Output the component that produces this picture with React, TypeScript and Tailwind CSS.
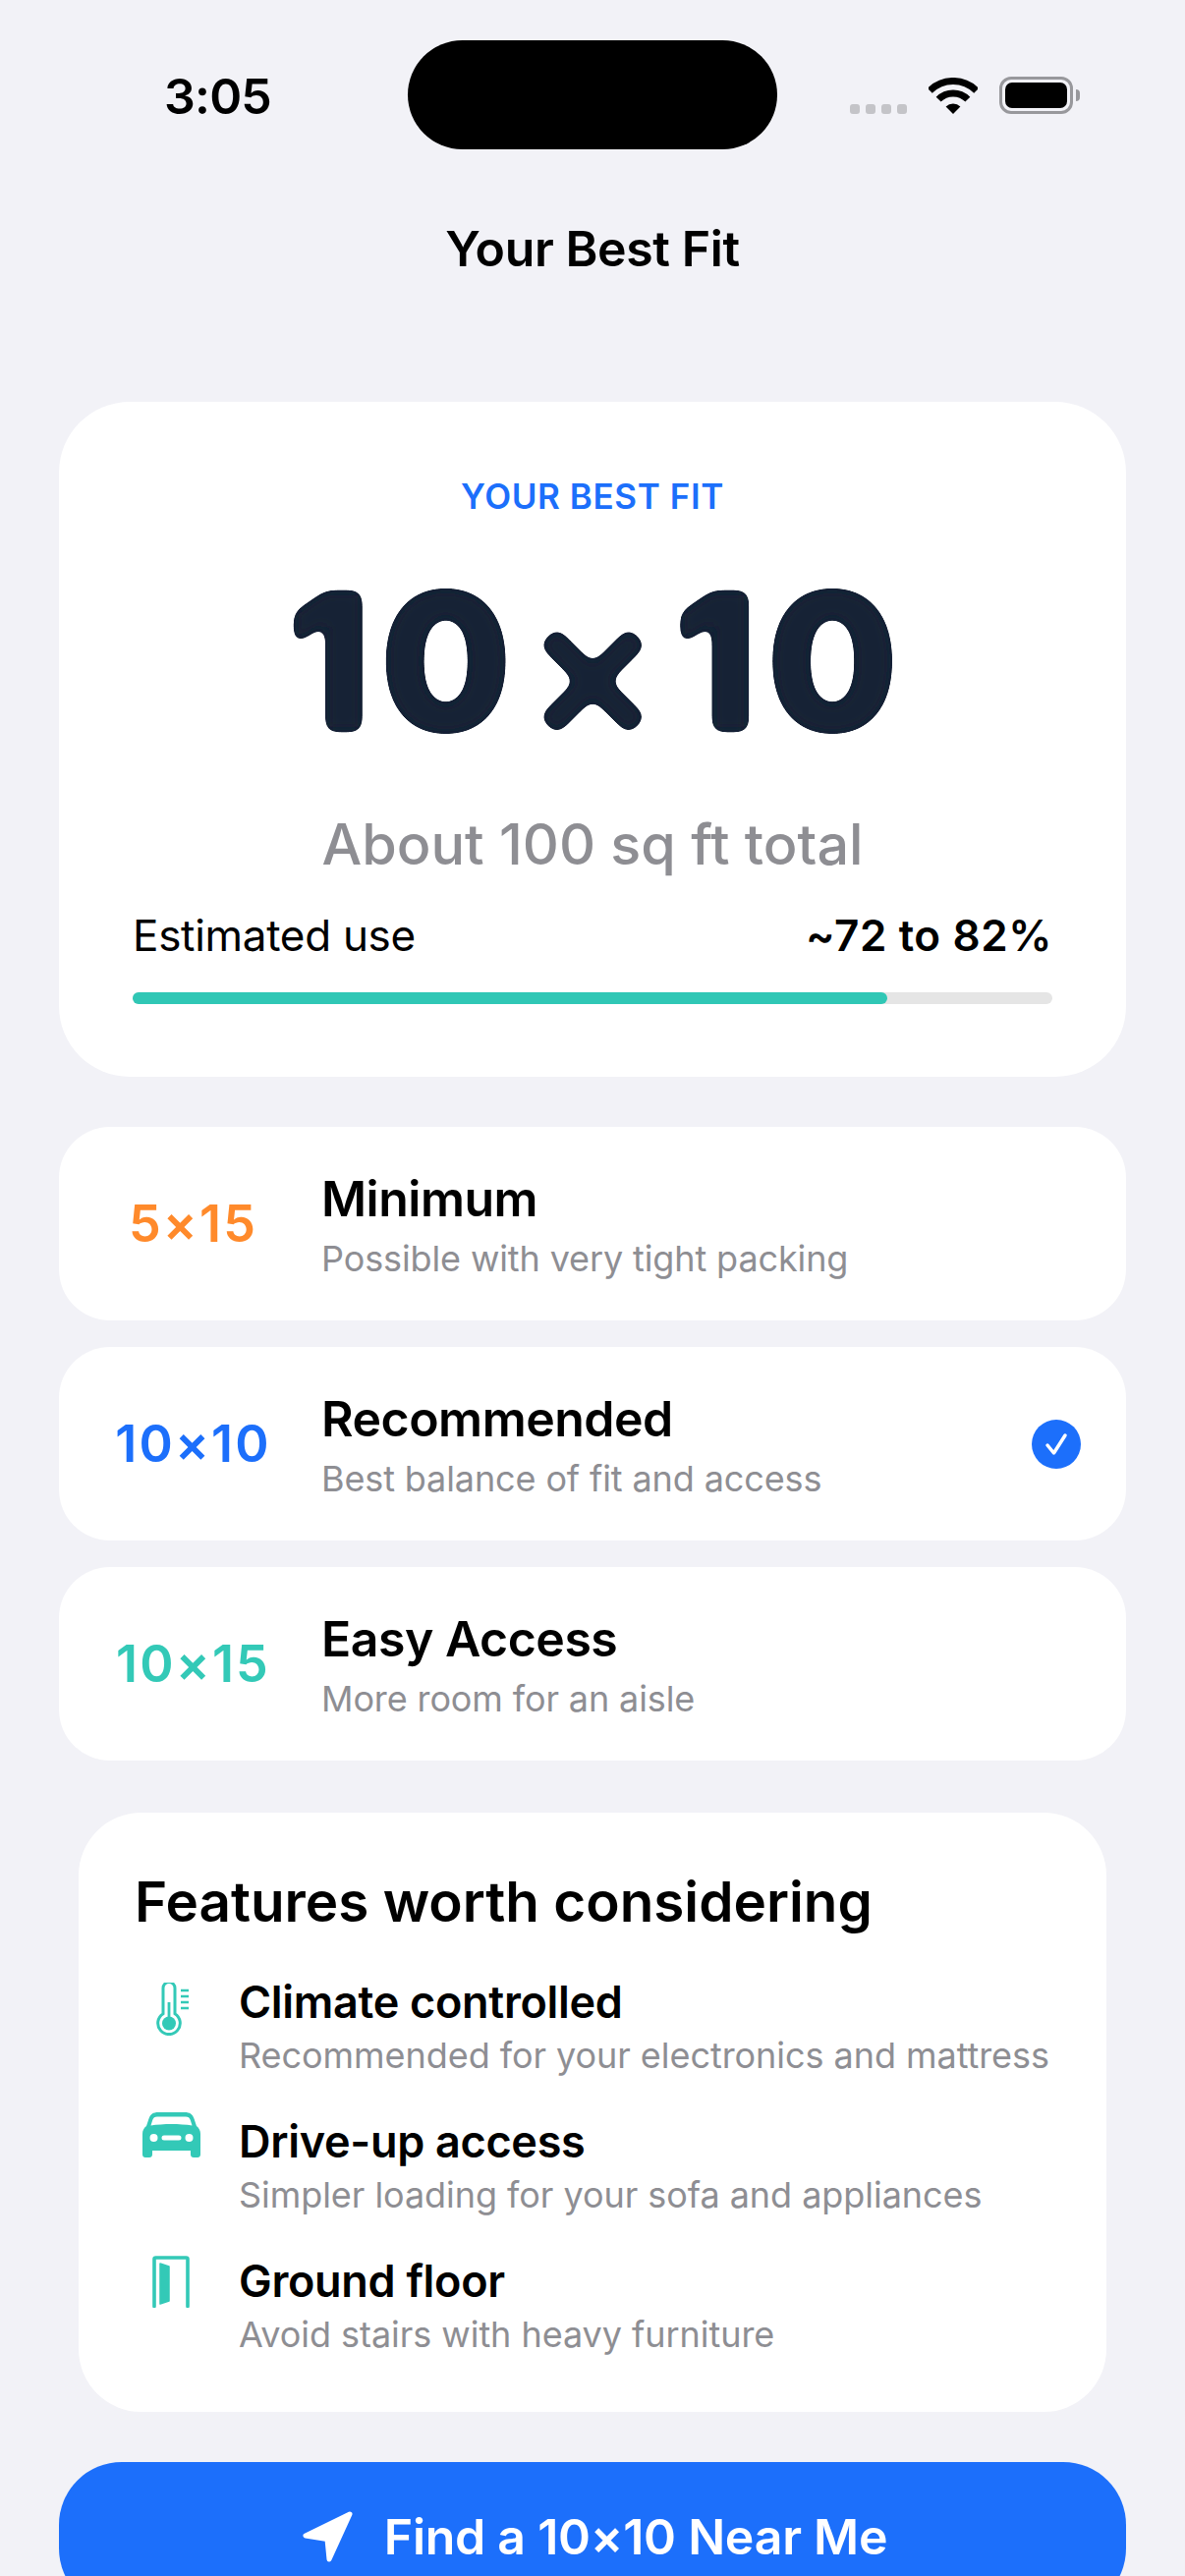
const sizes = [
  { size: "5×15", color: "text-[#ff8a2b]", title: "Minimum", sub: "Possible with very tight packing", picked: false },
  { size: "10×10", color: "text-[#1c6ffb]", title: "Recommended", sub: "Best balance of fit and access", picked: true },
  { size: "10×15", color: "text-[#33c9b7]", title: "Easy Access", sub: "More room for an aisle", picked: false },
];

const Thermometer = () => (
  <svg width="33" height="54" viewBox="0 0 33 54" fill="none" className="mt-[8px] ml-[2px]">
    <path
      d="M7 5.500a6 6 0 0 1 12 0v26.200a11.300 11.300 0 1 1-12 0z"
      stroke="#33c9b7"
      strokeWidth="3"
    />
    <circle cx="13" cy="41.500" r="7" fill="#33c9b7" />
    <rect x="11.600" y="20" width="2.800" height="20" fill="#33c9b7" />
    <path d="M25 8h8M25 14h8M25 20h8M25 26h8" stroke="#33c9b7" strokeWidth="2.600" />
  </svg>
);

const Car = () => (
  <svg width="59" height="46" viewBox="0 0 59 46" className="mt-[-2px]">
    <path
      fillRule="evenodd"
      fill="#33c9b7"
      d="M16 0h27c5 0 8 2 9.500 6.500L55 14c2.500 2 4 4.500 4 8v21c0 1.700-1.300 3-3 3h-4c-1.700 0-3-1.300-3-3v-4H10v4c0 1.700-1.300 3-3 3H3c-1.700 0-3-1.300-3-3V22c0-3.500 1.500-6 4-8l2.500-7.500C8 2 11 0 16 0zM15 4.500c-2.500 0-4 1-4.800 3.500L8.500 13.500c6-1 14-1.500 21-1.500s15 .5 21 1.500L48.800 8c-.8-2.500-2.300-3.500-4.800-3.500zM11.500 22a4 4 0 1 0 0 8 4 4 0 0 0 0-8zm36 0a4 4 0 1 0 0 8 4 4 0 0 0 0-8zM22 23.500a2.500 2.500 0 0 0 0 5h15a2.500 2.500 0 0 0 0-5z"
    />
  </svg>
);

const Door = () => (
  <svg width="38" height="53" viewBox="0 0 38 53" fill="none" className="mt-[2px]">
    <path d="M2 51.500V3.500A1.500 1.500 0 0 1 3.500 2h31A1.500 1.500 0 0 1 36 3.500v48" stroke="#33c9b7" strokeWidth="3.600" strokeLinecap="round" />
    <path d="M8 8l9 3v35l-9 3z" fill="#33c9b7" stroke="#33c9b7" strokeWidth="1.500" strokeLinejoin="round" />
  </svg>
);

const features = [
  { icon: <Thermometer />, title: "Climate controlled", sub: "Recommended for your electronics and mattress" },
  { icon: <Car />, title: "Drive-up access", sub: "Simpler loading for your sofa and appliances" },
  { icon: <Door />, title: "Ground floor", sub: "Avoid stairs with heavy furniture" },
];

export default function App() {
  return (
    <div className="w-[1206px] h-[2622px] overflow-hidden bg-[#f2f2f7] font-['Inter',sans-serif] text-black">
      {/* rounds off the corners of the big size label */}
      <svg width="0" height="0" className="absolute">
        <filter id="soften">
          <feGaussianBlur stdDeviation="7" />
          <feColorMatrix values="1 0 0 0 0  0 1 0 0 0  0 0 1 0 0  0 0 0 24 -11" />
        </filter>
      </svg>

      {/* status bar */}
      <div className="flex pt-[41px]">
        <div className="w-[415px] pl-[167px] pt-[2px] text-[50px] leading-[110px] font-semibold tracking-[-0.8px]">3:05</div>
        <div className="w-[376px] h-[111px] rounded-full bg-black" />
        <div className="ml-[74px] h-[75px] flex items-end gap-[22px]">
          <div className="flex gap-[6px] mb-0">
            <span className="w-[10px] h-[10px] rounded-[3px] bg-[#c4c4c8]" />
            <span className="w-[10px] h-[10px] rounded-[3px] bg-[#c4c4c8]" />
            <span className="w-[10px] h-[10px] rounded-[3px] bg-[#c4c4c8]" />
            <span className="w-[10px] h-[10px] rounded-[3px] bg-[#c4c4c8]" />
          </div>
          <svg width="50" height="37" viewBox="0 0 50 37" fill="none">
            <path d="M1.300 13.300a33.500 33.500 0 0 1 47.400 0" stroke="black" strokeWidth="7" />
            <path d="M10.150 22.150a21 21 0 0 1 29.700 0" stroke="black" strokeWidth="7" />
            <path d="M25 37L17.600 29.600a10.500 10.500 0 0 1 14.800 0z" fill="black" />
          </svg>
          <div className="flex items-center gap-[3px]">
            <div className="w-[75px] h-[38px] rounded-[12px] border-[3.500px] border-[#98989c] p-[3px]">
              <div className="w-full h-full rounded-[7px] bg-black" />
            </div>
            <div className="w-[4px] h-[12px] rounded-r-full bg-[#98989c]" />
          </div>
        </div>
      </div>

      <h1 className="mt-[70px] text-center text-[50px] leading-[60px] font-semibold tracking-[-0.4px]">Your Best Fit</h1>

      <div className="px-[60px]">
        {/* best fit card */}
        <div className="mt-[126px] bg-white rounded-[72px] px-[75px] pt-[76px] pb-[74px] flex flex-col items-center">
          <div className="text-[35px] leading-[40px] font-semibold tracking-[0.6px] text-[#1c6ffb]">YOUR BEST FIT</div>
          <div className="mt-[44px] pl-[10px] h-[190px] text-[192px] leading-[190px] font-extrabold tracking-[10px] text-[#142335] [-webkit-text-stroke:4px_#142335] [filter:url(#soften)]">
            10<span className="relative top-[13px] text-[217px] font-semibold [-webkit-text-stroke:1px_#142335]">×</span>10
          </div>
          <div className="mt-[65px] text-[57.500px] leading-[70px] font-medium text-[#8e8e93]">About 100 sq ft total</div>
          <div className="mt-[30px] w-full flex justify-between text-[44px] leading-[56px]">
            <span className="tracking-[-0.3px]">Estimated use</span>
            <span className="font-semibold tracking-[0.6px]">~72 to 82%</span>
          </div>
          <div className="mt-[30px] w-full h-[12px] rounded-full bg-[#e5e5e5]">
            <div className="w-[82%] h-full rounded-full bg-[#30c7b5]" />
          </div>
        </div>

        {/* size options */}
        <div className="mt-[51px] flex flex-col gap-[27px]">
          {sizes.map((s) => (
            <div key={s.title} className="h-[197px] bg-white rounded-[52px] flex items-center">
              <div className={`w-[267px] pl-[6px] text-center text-[52px] leading-[60px] font-semibold tracking-[2.2px] ${s.color}`}>{s.size}</div>
              <div className="pt-[1px]">
                <div className="text-[50px] leading-[60px] font-semibold tracking-[-0.5px]">{s.title}</div>
                <div className="mt-[9px] text-[36px] leading-[44px] tracking-[-0.12px] text-[#8e8e93]">{s.sub}</div>
              </div>
              {s.picked && (
                <svg width="50" height="50" viewBox="0 0 50 50" className="ml-auto mr-[46px]">
                  <circle cx="25" cy="25" r="25" fill="#1c6ffb" />
                  <path d="M16 26l6.500 8L34 16" fill="none" stroke="white" strokeWidth="3.500" strokeLinecap="round" strokeLinejoin="round" />
                </svg>
              )}
            </div>
          ))}
        </div>

        {/* features */}
        <div className="mt-[53px] mx-[20px] h-[610px] bg-white rounded-[64px] pl-[57px] pt-[55px]">
          <h2 className="text-[56.600px] leading-[72px] font-semibold">Features worth considering</h2>
          <div className="mt-[38px] flex flex-col gap-[38px]">
            {features.map((f) => (
              <div key={f.title} className="flex">
                <div className="w-[74px] mr-[32px] flex justify-center items-start">{f.icon}</div>
                <div>
                  <div className="text-[45px] leading-[56px] font-semibold tracking-[-0.3px]">{f.title}</div>
                  <div className="mt-[4px] text-[36px] leading-[44px] tracking-[-0.05px] text-[#8e8e93]">{f.sub}</div>
                </div>
              </div>
            ))}
          </div>
        </div>

        {/* cta */}
        <div className="mt-[51px] h-[152px] rounded-[64px] bg-[#1c6ffb] flex items-center justify-center gap-[32px] text-white">
          <svg width="56" height="56" viewBox="0 0 56 56">
            <path d="M53 5L8 27l22 3.500L32 51z" fill="white" stroke="white" strokeWidth="5" strokeLinejoin="round" />
          </svg>
          <span className="text-[50px] leading-[60px] font-semibold tracking-[-0.25px]">Find a 10×10 Near Me</span>
        </div>
      </div>
    </div>
  );
}
